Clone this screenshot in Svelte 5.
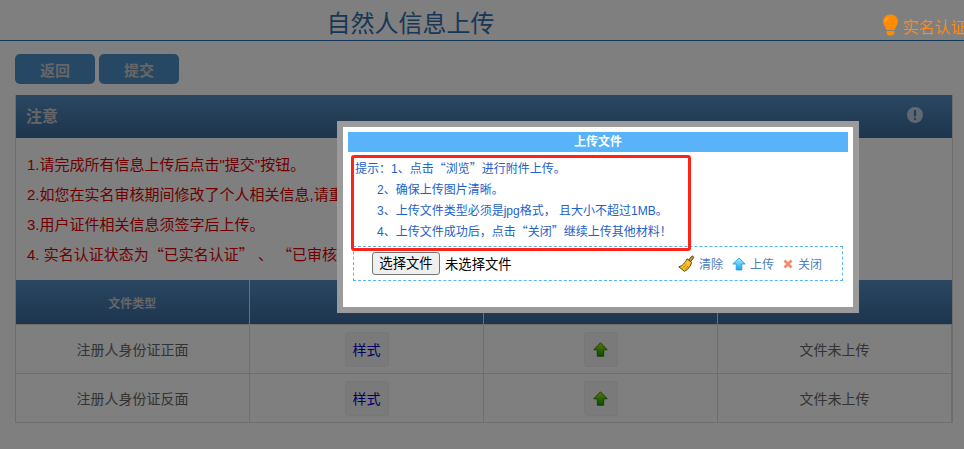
<script>
	const rows = ['注册人身份证正面', '注册人身份证反面'];
</script>

<div class="page">
	<header class="top">
		<h1>自然人信息上传</h1>
		<div class="tip">
			<svg width="17" height="22" viewBox="0 0 17 22">
				<path d="M8.500 0.500C4 0.500 1 3.600 1 7.500c0 3.400 2.700 5.200 3.300 8.500h8.400c.6-3.300 3.300-5.100 3.300-8.500 0-3.900-3-7-7.500-7z" fill="#ff8c00" />
				<path d="M4.600 17h7.800v2.600l-1.800 1.900H6.400l-1.800-1.900z" fill="#ff8c00" />
				<path d="M3.700 7.500c0-2 1.300-3.500 3-4" fill="none" stroke="#ffb040" stroke-width="1.200" />
			</svg>
			<span>实名认证</span>
		</div>
	</header>

	<div class="actions">
		<button class="btn">返回</button>
		<button class="btn">提交</button>
	</div>

	<section class="panel">
		<div class="panel-head">
			<span>注意</span>
			<svg width="16" height="16" viewBox="0 0 16 16">
				<circle cx="8" cy="8" r="8" fill="#fff" />
				<rect x="6.800" y="3" width="2.400" height="6.500" rx="1" fill="#4a78a8" />
				<rect x="6.800" y="10.700" width="2.400" height="2.400" rx="1" fill="#4a78a8" />
			</svg>
		</div>
		<div class="notes">
			<p>1.请完成所有信息上传后点击"提交"按钮。</p>
			<p>2.如您在实名审核期间修改了个人相关信息,请重新上传相关材料并再次提交审核。</p>
			<p>3.用户证件相关信息须签字后上传。</p>
			<p>4. 实名认证状态为<span class="q">“</span>已实名认证<span class="q">”</span> 、 <span class="q">“</span>已审核认证<span class="q">”</span>的用户无需重复上传。</p>
		</div>
		<table>
			<thead>
				<tr>
					<th>文件类型</th>
					<th>样式</th>
					<th>上传</th>
					<th>状态</th>
				</tr>
			</thead>
			<tbody>
				{#each rows as row}
					<tr>
						<td>{row}</td>
						<td><span class="cell-btn sample">样式</span></td>
						<td>
							<span class="cell-btn up">
								<svg width="15" height="15" viewBox="0 0 15 15">
									<defs>
										<linearGradient id="green" x1="0" y1="0" x2="0" y2="1">
											<stop offset="0" stop-color="#c0ee00" />
											<stop offset="1" stop-color="#0a9a00" />
										</linearGradient>
									</defs>
									<path d="M7.500 .8L14.200 7.800H10.700V14.200H4.300V7.800H.8z" fill="url(#green)" stroke="#1c8a00" />
								</svg>
							</span>
						</td>
						<td>文件未上传</td>
					</tr>
				{/each}
			</tbody>
		</table>
	</section>
</div>

<div class="overlay"></div>

<div class="modal">
	<div class="modal-title">上传文件</div>
	<div class="hint">
		<p>提示：1、点击<span class="q">“</span>浏览<span class="q">”</span>进行附件上传。</p>
		<p class="indent">2、确保上传图片清晰。</p>
		<p class="indent">3、上传文件类型必须是jpg格式， 且大小不超过1MB。</p>
		<p class="indent">4、上传文件成功后，点击<span class="q">“</span>关闭<span class="q">”</span>继续上传其他材料！</p>
	</div>
	<div class="upload">
		<div class="picker">
			<span class="choose">选择文件</span>
			<span>未选择文件</span>
		</div>
		<div class="ops">
			<span class="op">
				<svg width="17" height="17" viewBox="0 0 17 17">
					<path d="M10.500 5L13.800 1.300C14.500.6 16.200 2 15.600 2.800L12.500 6.800z" fill="#d6951f" stroke="#4e3206" stroke-width=".9" />
					<path d="M9 3.800L13.500 7.400C13 11 9.800 15 6.400 16.300L.8 11.800C4 11.300 7.500 7.500 9 3.800z" fill="#fbc42c" stroke="#4e3206" stroke-width=".9" />
					<path d="M4.500 13.200l3.800-3.700M7 14.500l3-3.500" stroke="#b57c08" stroke-width="1" fill="none" />
				</svg>
				清除
			</span>
			<span class="op">
				<svg width="14" height="14" viewBox="0 0 14 14">
					<defs>
						<linearGradient id="blue" x1="0" y1="0" x2="0" y2="1">
							<stop offset="0" stop-color="#a8ecff" />
							<stop offset="1" stop-color="#12a4f2" />
						</linearGradient>
					</defs>
					<path d="M7 1L13.200 7H9.800V13H4.200V7H.8z" fill="url(#blue)" stroke="#1c9be0" stroke-width=".8" />
				</svg>
				上传
			</span>
			<span class="op">
				<svg class="close" width="10" height="10" viewBox="0 0 10 10">
					<path d="M1.500 1.500L8.500 8.500M8.500 1.500L1.500 8.500" stroke="#f58a70" stroke-width="2.800" />
				</svg>
				关闭
			</span>
		</div>
	</div>
</div>

<div class="annotation"></div>

<style>
	:global(body) {
		margin: 0;
		background: #fff;
		font-family: 'Liberation Sans', 'Noto Sans CJK SC', sans-serif;
	}

	.page {
		width: 964px;
		height: 449px;
		overflow: hidden;
	}

	.top {
		display: flex;
		align-items: flex-end;
		height: 40px;
		border-bottom: 1px solid #2f74b0;
		white-space: nowrap;
	}

	h1 {
		flex: 0 0 821px;
		margin: 0;
		height: 32px;
		line-height: 32px;
		font-size: 24px;
		font-weight: normal;
		text-align: center;
		color: #336ea8;
	}

	.tip {
		position: relative;
		z-index: 2;
		display: flex;
		align-items: center;
		gap: 4px;
		height: 28px;
		margin-left: 61px;
		color: #ff8c1a;
		font-size: 16px;
	}

	.tip svg {
		margin-bottom: 3px;
	}

	.actions {
		display: flex;
		gap: 4px;
		margin: 13px 0 11px 15px;
	}

	.btn {
		width: 80px;
		height: 30px;
		padding: 0;
		border: 0;
		border-radius: 5px;
		background: #4f90c8;
		color: #ccc;
		font: bold 15px 'Liberation Sans', 'Noto Sans CJK SC', sans-serif;
	}

	.panel {
		width: 936px;
		margin-left: 15px;
		border-left: 1px solid #ddd;
		border-right: 1px solid #ddd;
	}

	.panel-head {
		display: flex;
		justify-content: space-between;
		align-items: center;
		height: 39px;
		padding: 0 29px 4px 10px;
		background: linear-gradient(#558fc4, #3c6a9c);
		color: #ccc;
		font-size: 16px;
		font-weight: bold;
	}

	.panel-head svg {
		opacity: 0.65;
	}

	.notes {
		height: 142px;
		padding: 12px 0 0 11px;
		box-sizing: border-box;
		font-size: 15px;
		color: #e00000;
		white-space: nowrap;
		overflow: hidden;
	}

	.notes p {
		margin: 0;
		height: 30px;
		line-height: 30px;
	}

	.q {
		font-family: 'Noto Sans CJK SC', sans-serif;
		line-height: 0;
	}

	table {
		width: 937px;
		margin-left: -1px;
		table-layout: fixed;
		border-collapse: collapse;
	}

	th {
		height: 44px;
		padding: 0;
		background: linear-gradient(#558fc4, #3c6a9c);
		border-left: 1px solid #ddd;
		color: #ccc;
		font-size: 12px;
	}

	th:first-child {
		border-left: 0;
	}

	td {
		height: 48px;
		padding: 0;
		border: 1px solid #ddd;
		font-size: 14px;
		color: #666;
		text-align: center;
	}

	.cell-btn {
		display: inline-flex;
		justify-content: center;
		align-items: center;
		height: 35px;
		border: 1px solid #eee;
		border-radius: 3px;
		box-sizing: border-box;
		background: #f4f4f4;
		vertical-align: middle;
	}

	.sample {
		width: 44px;
		color: #0000d0;
	}

	.up {
		width: 34px;
	}

	.overlay {
		position: fixed;
		inset: 0;
		background: rgba(0, 0, 0, 0.5);
	}

	.modal {
		position: fixed;
		left: 337px;
		top: 121px;
		width: 522px;
		height: 192px;
		box-sizing: border-box;
		padding: 5px;
		border: 6px solid #9b9b9b;
		background: #fff;
	}

	.modal-title {
		height: 20px;
		line-height: 20px;
		background: #58b3f8;
		color: #fff;
		font-size: 12px;
		font-weight: bold;
		text-align: center;
	}

	.hint {
		height: 94px;
		padding: 7px 0 0 7px;
		box-sizing: border-box;
		font-size: 12px;
		color: #1c62c8;
	}

	.hint p {
		margin: 0;
		height: 21px;
		line-height: 21px;
	}

	.hint .indent {
		padding-left: 22px;
	}

	.upload {
		display: flex;
		justify-content: space-between;
		align-items: center;
		width: 490px;
		height: 35px;
		margin-left: 5px;
		box-sizing: border-box;
		border: 1px dashed #58b3f8;
		padding: 0 20px 0 18px;
	}

	.picker {
		display: flex;
		align-items: center;
		gap: 5px;
		font-size: 13.33px;
		color: #000;
	}

	.choose {
		width: 68px;
		height: 23px;
		line-height: 21px;
		box-sizing: border-box;
		border: 1px solid #767676;
		border-radius: 3px;
		background: #efefef;
		text-align: center;
	}

	.ops {
		display: flex;
		gap: 9px;
		font-size: 12px;
		color: #4a80c0;
	}

	.op {
		display: flex;
		align-items: center;
		gap: 4px;
	}

	.close {
		margin-right: 1px;
	}

	.annotation {
		position: fixed;
		left: 351px;
		top: 155px;
		width: 340px;
		height: 96px;
		box-sizing: border-box;
		border: 3px solid #ff2215;
		border-radius: 3px;
	}
</style>
